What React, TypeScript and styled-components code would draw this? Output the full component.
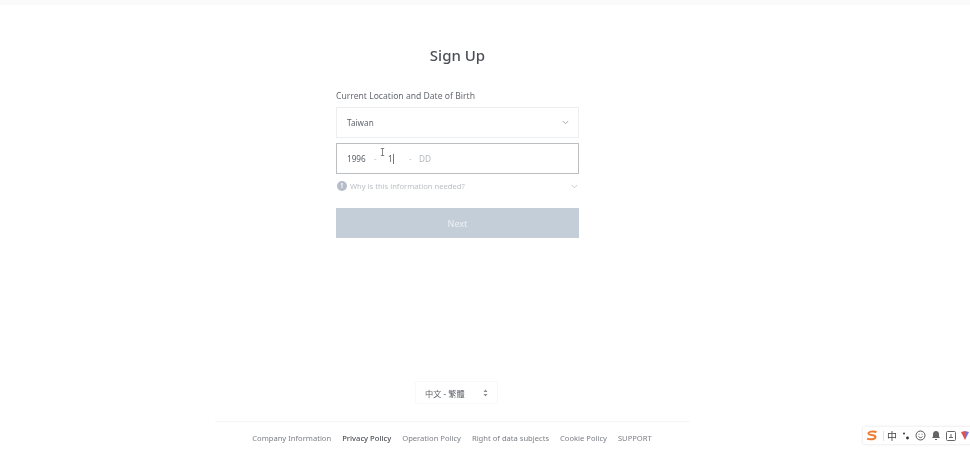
import React from 'react';
import styled, { createGlobalStyle } from 'styled-components';

const GlobalStyle = createGlobalStyle`
  html, body {
    margin: 0;
    padding: 0;
    background: #fff;
    overflow: hidden;
  }
  body {
    font-family: "Noto Sans", "Noto Sans CJK TC", sans-serif;
  }
`;

// Page

const Page = styled.div`
  position: relative;
  width: 970px;
  height: 454px;
  overflow: hidden;
  display: flex;
  flex-direction: column;
  align-items: flex-start;
  box-sizing: border-box;
  border-top: 5px solid #fafafa;
  filter: blur(0.35px);
`;

const Main = styled.main`
  width: 915px;
  display: flex;
  flex-direction: column;
  align-items: center;
`;

const Title = styled.h1`
  margin: 37px 0 0;
  font-size: 15px;
  line-height: 26px;
  font-weight: 500;
  color: #4a4f57;
`;

const Form = styled.div`
  width: 243px;
  margin-top: 21px;
  display: flex;
  flex-direction: column;
`;

const Label = styled.div`
  font-size: 8.6px;
  line-height: 14px;
  color: #666a70;
  margin-bottom: 4px;
`;

const Field = styled.div<{ $active?: boolean }>`
  height: 31px;
  box-sizing: border-box;
  border: 1px solid ${(p) => (p.$active ? '#bcbfc2' : '#eceef0')};
  display: flex;
  align-items: center;
  padding: 0 9px 0 10px;
  font-size: 8.2px;
  color: #60656c;
  margin-bottom: 5px;
`;

const Grow = styled.span`
  flex: 1;
`;

const DateInput = styled.span<{ $width: number; $placeholder?: boolean }>`
  width: ${(p) => p.$width}px;
  color: ${(p) => (p.$placeholder ? '#b4b8bd' : '#5a5f66')};
`;

const Dash = styled.span<{ $width: number }>`
  width: ${(p) => p.$width}px;
  color: #c6c9cd;
`;

const Caret = styled.span`
  display: inline-block;
  width: 1px;
  height: 10px;
  background: #777;
  vertical-align: -2px;
`;

const HintRow = styled.div`
  display: flex;
  align-items: center;
  height: 14px;
  padding-right: 1px;
  font-size: 7.6px;
  color: #bcc0c5;
`;

const InfoDot = styled.span`
  width: 10px;
  height: 10px;
  border-radius: 50%;
  background: #b6bcc8;
  color: #fff;
  font-size: 7px;
  font-weight: 700;
  line-height: 10px;
  text-align: center;
  margin: 0 3px 0 1px;
`;

const NextButton = styled.button`
  height: 30px;
  margin-top: 15px;
  border: none;
  padding: 2px 0 0;
  background: #c4ced8;
  color: #e9edf1;
  font-family: inherit;
  font-size: 8.8px;
  font-weight: 500;
`;

const LanguageSelect = styled.div`
  width: 83px;
  height: 23px;
  margin-top: 143px;
  margin-right: 2px;
  box-sizing: border-box;
  border: 1px solid #f8f8f8;
  border-radius: 2px;
  padding: 0 9px;
  display: flex;
  align-items: center;
  justify-content: space-between;
  font-size: 8.2px;
  color: #5f6368;
`;

const FooterBar = styled.footer`
  width: 475px;
  margin-top: 17px;
  margin-right: 11px;
  border-top: 1px solid #f6f6f6;
  padding-top: 9px;
  display: flex;
  justify-content: center;
  gap: 11px;
  font-size: 7.6px;
  line-height: 14px;
  color: #7b7f85;
`;

const FooterLink = styled.span<{ $bold?: boolean }>`
  white-space: nowrap;
  font-weight: ${(p) => (p.$bold ? 500 : 400)};
  color: ${(p) => (p.$bold ? '#4d5157' : '#7b7f85')};
`;

// Overlays: the mouse cursor and the IME toolbar float over the page

const MouseCursor = styled.svg`
  position: absolute;
  left: 380px;
  top: 143px;
`;

const ImeBar = styled.div`
  position: absolute;
  left: 863px;
  top: 422px;
  width: 120px;
  height: 17px;
  display: flex;
  align-items: center;
  gap: 5px;
  padding-left: 3px;
  box-sizing: border-box;
  background: #fff;
  box-shadow: 0 0 3px rgba(0, 0, 0, 0.14);
  border-radius: 2px;
  font-size: 10px;
  color: #444;
`;

const ImeDivider = styled.span`
  width: 1px;
  height: 10px;
  margin-right: -2px;
  background: #e3e3e3;
`;

const ImeIcon = styled.svg`
  flex: none;
`;

const Chevron = ({ color = '#a4a8ad' }: { color?: string }) => (
  <svg width="7" height="5" viewBox="0 0 7 5" fill="none" stroke={color} strokeWidth="1">
    <path d="M0.8 1 L3.5 3.8 L6.2 1" />
  </svg>
);

const Updown = () => (
  <svg width="5" height="8" viewBox="0 0 5 8" fill="#8b8f94">
    <path d="M2.5 0.5 L4.5 3 H0.5 Z M2.5 7.5 L0.5 5 H4.5 Z" />
  </svg>
);

const footerLinks = [
  { label: 'Company Information' },
  { label: 'Privacy Policy', bold: true },
  { label: 'Operation Policy' },
  { label: 'Right of data subjects' },
  { label: 'Cookie Policy' },
  { label: 'SUPPORT' },
];

export default function App() {
  return (
    <Page>
      <GlobalStyle />
      <Main>
        <Title>Sign Up</Title>
        <Form>
          <Label>Current Location and Date of Birth</Label>
          <Field>
            <Grow>Taiwan</Grow>
            <Chevron />
          </Field>
          <Field $active>
            <DateInput $width={27}>1996</DateInput>
            <Dash $width={14}>-</Dash>
            <DateInput $width={21}>
              1<Caret />
            </DateInput>
            <Dash $width={10}>-</Dash>
            <DateInput $width={30} $placeholder>
              DD
            </DateInput>
          </Field>
          <HintRow>
            <InfoDot>!</InfoDot>
            <Grow>Why is this information needed?</Grow>
            <Chevron color="#c8cbcf" />
          </HintRow>
          <NextButton type="button">Next</NextButton>
        </Form>
        <LanguageSelect>
          <span>中文 - 繁體</span>
          <Updown />
        </LanguageSelect>
        <FooterBar>
          {footerLinks.map((link) => (
            <FooterLink key={link.label} $bold={link.bold}>
              {link.label}
            </FooterLink>
          ))}
        </FooterBar>
      </Main>
      <MouseCursor width="5" height="9" viewBox="0 0 5 9" fill="none" stroke="#666" strokeWidth="0.8">
        <path d="M0.8 0.5 H4.2 M2.5 0.5 V7.5 M0.8 7.5 H4.2" />
      </MouseCursor>
      <ImeBar>
        <ImeIcon width="12" height="11" viewBox="0 0 12 11" fill="none" stroke="#ee7a2e" strokeWidth="2">
          <path d="M10.5 2 C7 0.8 2 1.6 2.5 3.8 C3 5.6 9.5 4.6 9.5 7 C9.5 9.4 4 9.8 1 8.6" />
        </ImeIcon>
        <ImeDivider />
        <span>中</span>
        <ImeIcon width="8" height="10" viewBox="0 0 8 10" fill="#333">
          <circle cx="2" cy="2.5" r="1" />
          <circle cx="5.5" cy="7" r="1.4" />
        </ImeIcon>
        <ImeIcon width="11" height="11" viewBox="0 0 11 11" fill="none" stroke="#555" strokeWidth="1">
          <circle cx="5.5" cy="5.5" r="4.5" />
          <path d="M3.5 6.5 C4.5 8 6.5 8 7.5 6.5 M4 3.8 V4.6 M7 3.8 V4.6" />
        </ImeIcon>
        <ImeIcon width="10" height="11" viewBox="0 0 10 11" fill="#666">
          <path d="M5 1 C3 1 2 2.5 2 4 V6.5 L1 8 H9 L8 6.5 V4 C8 2.5 7 1 5 1 Z M4 9 H6 V10 H4 Z" />
        </ImeIcon>
        <ImeIcon width="10" height="10" viewBox="0 0 10 10" fill="none" stroke="#666" strokeWidth="1">
          <rect x="0.5" y="0.5" width="9" height="9" rx="1" />
          <path d="M3 6.5 H7 M5 3 V6.5" />
        </ImeIcon>
        <ImeIcon width="8" height="10" viewBox="0 0 8 10">
          <path d="M0 1 L4 0 L4 9 Z" fill="#d9534f" />
          <path d="M4 0 L8 1 L4 9 Z" fill="#7c6fd8" />
        </ImeIcon>
      </ImeBar>
    </Page>
  );
}
